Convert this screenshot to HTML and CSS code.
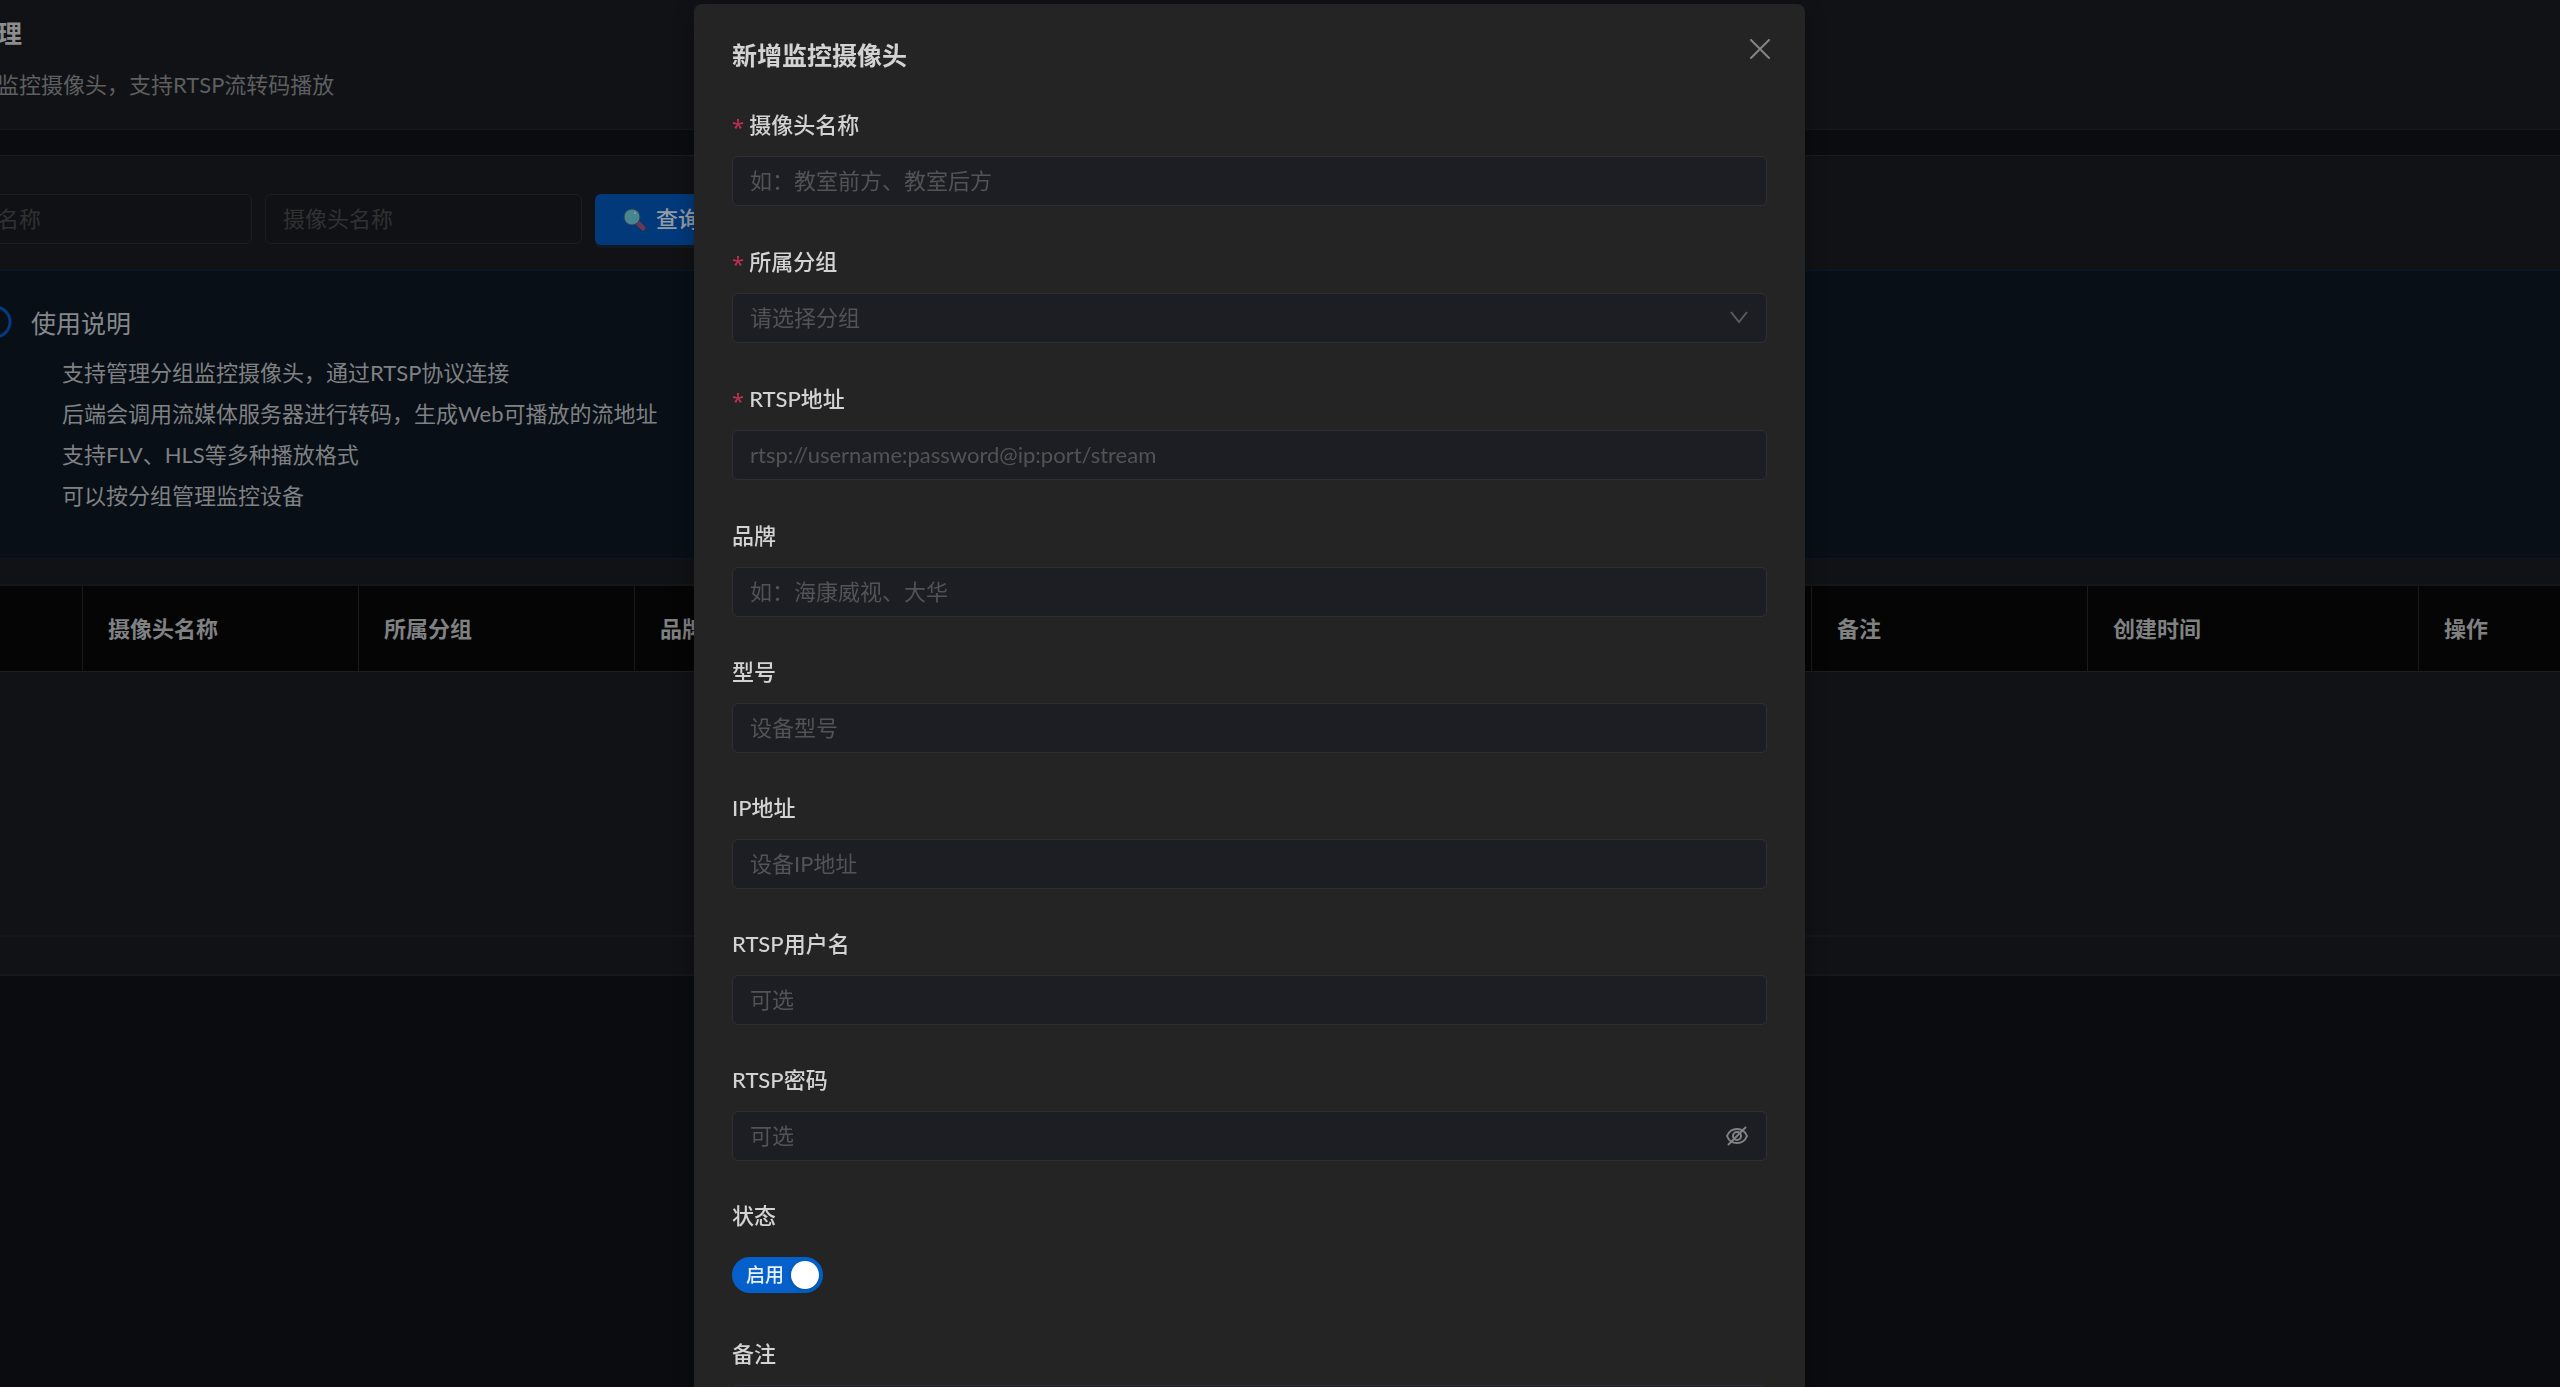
FILE: index.html
```html
<!DOCTYPE html>
<html lang="zh-CN">
<head>
    <meta charset="UTF-8">
    <meta name="viewport" content="width=device-width, initial-scale=1.0">
    <title>新增监控摄像头</title>
    <link rel="stylesheet" href="styles.css">
</head>
<body>
    <div class="page">
        <header class="page-header">
            <h1>理</h1>
            <p>监控摄像头，支持RTSP流转码播放</p>
        </header>

        <main class="card">
            <form class="filters">
                <input class="input" type="text" placeholder="分组名称" aria-label="分组名称">
                <input class="input" type="text" placeholder="摄像头名称" aria-label="摄像头名称">
                <button class="btn-search" type="button">
                    <svg width="23" height="24" viewBox="0 0 23 24" aria-hidden="true">
                        <path d="M16 17l4 4" stroke="#683950" stroke-width="5" stroke-linecap="round"/>
                        <circle cx="9" cy="10" r="8" fill="#478591" stroke="#2b4258" stroke-width="1"/>
                        <circle cx="12" cy="6" r="1" fill="#7fa9b0"/>
                    </svg>
                    查询
                </button>
            </form>

            <section class="notice">
                <svg class="notice-icon" width="34" height="34" viewBox="0 0 34 34" aria-hidden="true">
                    <circle cx="17" cy="17" r="15" fill="none" stroke="#023b80" stroke-width="3"/>
                    <path d="M17 15v9M17 9v3" stroke="#023b80" stroke-width="3"/>
                </svg>
                <div>
                    <h2>使用说明</h2>
                    <ul>
                        <li>支持管理分组监控摄像头，通过RTSP协议连接</li>
                        <li>后端会调用流媒体服务器进行转码，生成Web可播放的流地址</li>
                        <li>支持FLV、HLS等多种播放格式</li>
                        <li>可以按分组管理监控设备</li>
                    </ul>
                </div>
            </section>

            <table class="camera-table">
                <colgroup>
                    <col class="col-index">
                    <col class="col-text">
                    <col class="col-text">
                    <col>
                    <col class="col-text">
                    <col class="col-time">
                    <col class="col-action">
                </colgroup>
                <thead>
                    <tr>
                        <th></th>
                        <th>摄像头名称</th>
                        <th>所属分组</th>
                        <th>品牌</th>
                        <th>备注</th>
                        <th>创建时间</th>
                        <th>操作</th>
                    </tr>
                </thead>
                <tbody>
                    <tr><td colspan="7"></td></tr>
                </tbody>
            </table>
        </main>
    </div>

    <!-- Modal -->
    <div class="modal-wrap">
        <div class="modal" role="dialog" aria-labelledby="modal-title">
            <button class="modal-close" type="button" aria-label="关闭">
                <svg width="20" height="20" viewBox="0 0 20 20" aria-hidden="true">
                    <path d="M1 1l18 18M19 1L1 19" stroke="#858585" stroke-width="2" stroke-linecap="round"/>
                </svg>
            </button>
            <h2 class="modal-title" id="modal-title">新增监控摄像头</h2>

            <form>
                <div class="field required">
                    <label for="name">摄像头名称</label>
                    <input class="input" type="text" id="name" placeholder="如：教室前方、教室后方">
                </div>
                <div class="field required">
                    <label for="group">所属分组</label>
                    <div class="control">
                        <select class="input" id="group">
                            <option value="">请选择分组</option>
                        </select>
                        <svg class="suffix" width="18" height="18" viewBox="0 0 18 18" aria-hidden="true">
                            <path d="M1 4l8 10 8-10" fill="none" stroke="#5b5c5f" stroke-width="2"/>
                        </svg>
                    </div>
                </div>
                <div class="field required">
                    <label for="rtsp">RTSP地址</label>
                    <input class="input" type="text" id="rtsp" placeholder="rtsp://username:password@ip:port/stream">
                </div>
                <div class="field">
                    <label for="brand">品牌</label>
                    <input class="input" type="text" id="brand" placeholder="如：海康威视、大华">
                </div>
                <div class="field">
                    <label for="model">型号</label>
                    <input class="input" type="text" id="model" placeholder="设备型号">
                </div>
                <div class="field">
                    <label for="ip">IP地址</label>
                    <input class="input" type="text" id="ip" placeholder="设备IP地址">
                </div>
                <div class="field">
                    <label for="user">RTSP用户名</label>
                    <input class="input" type="text" id="user" placeholder="可选">
                </div>
                <div class="field">
                    <label for="pass">RTSP密码</label>
                    <div class="control">
                        <input class="input" type="password" id="pass" placeholder="可选">
                        <svg class="suffix" width="22" height="20" viewBox="0 0 22 20" fill="none" stroke="#818285" stroke-width="2" aria-hidden="true">
                            <path d="M1 10c2-5 6-7 10-7s8 2 10 7c-2 5-6 7-10 7S3 15 1 10z"/>
                            <circle cx="11" cy="10" r="4"/>
                            <path d="M2 19L20 1"/>
                        </svg>
                    </div>
                </div>
                <div class="field">
                    <label for="status">状态</label>
                    <div class="switch-row">
                        <label class="switch">启用<input type="checkbox" id="status" checked></label>
                    </div>
                </div>
                <div class="field">
                    <label for="remark">备注</label>
                    <textarea class="input" id="remark" rows="3"></textarea>
                </div>
            </form>
        </div>
    </div>
</body>
</html>
```
FILE: styles.css
```css
* {
    box-sizing: border-box;
}

body {
    margin: 0;
    background-color: #0b0c0f;
    color: #808183;
    font-family: "Lato", "Noto Sans CJK SC", sans-serif;
    font-size: 22px;
    line-height: 30px;
    overflow: hidden;
}

h1, h2, p, ul {
    margin: 0;
    padding: 0;
}

input, select, textarea, button {
    font: inherit;
}

/* Background page, scrolled a little to the right */
.page {
    margin-left: -65px;
}

.page-header {
    height: 130px;
    padding: 15px 62px;
    background-color: #111215;
    border-bottom: 1px solid #17181b;
}

.page-header h1 {
    margin-bottom: 19px;
    font-size: 25px;
    line-height: 36px;
    color: #8d8d8e;
}

.page-header p {
    color: #5e5f61;
}

.card {
    margin-top: 25px;
    background-color: #111215;
    border-top: 1px solid #1b1c1f;
    border-bottom: 2px solid #16171a;
    padding-bottom: 37px;
}

.filters {
    display: flex;
    gap: 13px;
    padding: 38px 0 25px;
}

.input {
    display: block;
    width: 100%;
    height: 50px;
    padding: 0 17px 1px;
    background-color: #1d1e23;
    border: 1px solid #2f3034;
    border-radius: 6px;
    color: #d3d3d3;
}

.input::placeholder {
    color: #525356;
    opacity: 1;
}

.filters .input {
    width: 317px;
    background-color: #101114;
    border-color: #1d1e21;
}

.filters .input::placeholder {
    color: #303133;
}

.btn-search {
    display: flex;
    align-items: center;
    gap: 10px;
    height: 51px;
    padding: 0 28px 1px;
    background-color: #02397b;
    border: none;
    border-radius: 6px;
    box-shadow: 0 3px 0 #131920;
    color: #959ba3;
    font-weight: 500;
}

/* Notice */
.notice {
    display: flex;
    gap: 19px;
    height: 289px;
    padding: 34px 43px;
    background-color: #080f16;
    border-top: 1px solid #071a30;
    border-bottom: 1px solid #07182b;
}

.notice h2 {
    margin-bottom: 11px;
    font-size: 25px;
    font-weight: 400;
    line-height: 36px;
    color: #85888b;
}

.notice ul {
    padding-left: 31px;
    list-style: none;
}

.notice li {
    line-height: 41px;
}

/* Table */
.camera-table {
    width: 100%;
    margin-top: 25px;
    border-collapse: separate;
    border-spacing: 0;
    table-layout: fixed;
}

.camera-table th {
    height: 88px;
    padding: 0 25px;
    background-color: #050505;
    border-top: 2px solid #151618;
    border-right: 1px solid #1a1b1d;
    border-bottom: 1px solid #1d1e20;
    text-align: left;
}

.camera-table th:last-child {
    border-right: none;
}

.camera-table td {
    height: 265px;
    padding: 0;
    border-bottom: 2px solid #16171a;
}

.col-index {
    width: 148px;
}

.col-text {
    width: 276px;
}

.col-time {
    width: 331px;
}

.col-action {
    width: 141px;
}

/* Modal */
.modal-wrap {
    position: fixed;
    inset: 0 61px 0 0;
    display: flex;
    align-items: flex-start;
    justify-content: center;
    padding-top: 4px;
    overflow: hidden;
}

.modal {
    position: relative;
    width: 1111px;
    padding: 33px 38px;
    background-color: #242424;
    border-radius: 8px;
    box-shadow: 0 8px 22px rgba(0, 0, 0, 0.3);
}

.modal-close {
    position: absolute;
    top: 30px;
    right: 30px;
    display: flex;
    padding: 5px;
    background: none;
    border: none;
}

.modal-title {
    margin-bottom: 37px;
    font-size: 25px;
    line-height: 36px;
    color: #d3d3d3;
}

.field {
    margin-bottom: 40px;
}

.field.required {
    margin-bottom: 41px;
}

.field > label {
    display: block;
    margin-bottom: 16px;
    color: #d3d3d3;
    font-weight: 500;
}

.field.required > label::before {
    content: "*";
    margin-right: 5px;
    color: #c0304f;
    font-family: "Noto Sans", sans-serif;
    font-weight: 400;
    line-height: 20px;
    vertical-align: -2px;
}

.control {
    position: relative;
}

.control select {
    appearance: none;
    color: #525356;
}

.suffix {
    position: absolute;
    top: 15px;
    right: 19px;
}

.switch-row {
    height: 52px;
    padding-top: 10px;
}

.switch {
    display: inline-flex;
    align-items: center;
    gap: 7px;
    height: 36px;
    padding: 0 4px 0 14px;
    background-color: #0560cc;
    border-radius: 18px;
    color: #e8f0fa;
    font-size: 19px;
    font-weight: 500;
}

.switch input {
    width: 28px;
    height: 28px;
    margin: 0;
    appearance: none;
    background-color: #fff;
    border-radius: 50%;
    box-shadow: 0 2px 4px rgba(0, 35, 11, 0.2);
}

textarea.input {
    height: 120px;
    padding: 10px 17px;
}
```
